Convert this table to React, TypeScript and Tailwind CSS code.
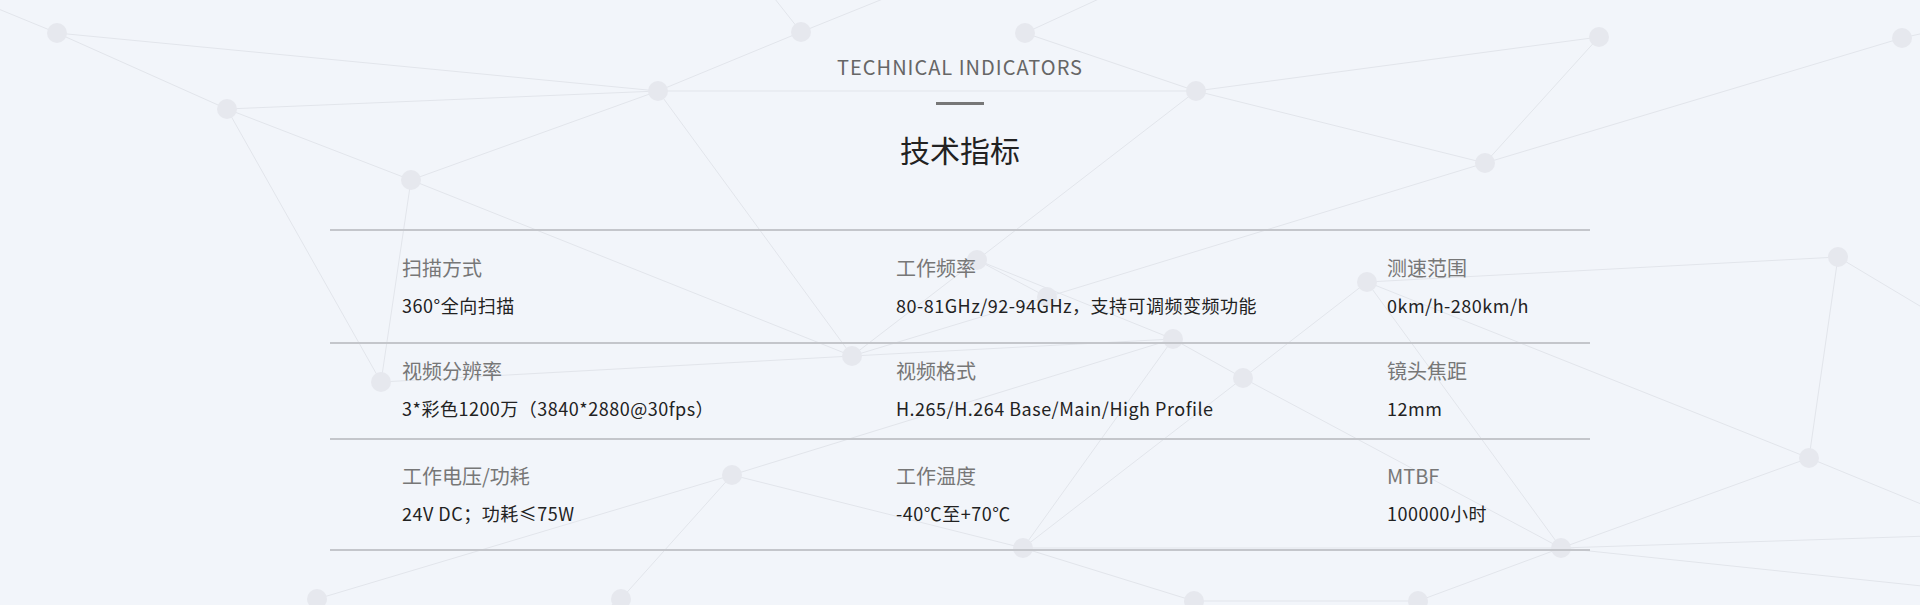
const nodes: Record<string, [number, number]> = {
  A: [57, 33],
  B: [227, 109],
  C: [411, 180],
  D: [658, 91],
  E: [801, 32],
  F: [1025, 33],
  G: [1196, 91],
  H: [1485, 163],
  I: [1599, 37],
  J: [1902, 38],
  K: [1838, 257],
  L: [1809, 458],
  M: [1561, 548],
  N: [1367, 282],
  O: [1243, 378],
  P: [1173, 339],
  Q: [977, 260],
  Z: [1047, 297],
  R: [852, 356],
  S: [381, 382],
  T: [732, 475],
  U: [1023, 548],
  V: [621, 599],
  W: [317, 599],
  X: [1194, 601],
  Y: [1418, 601],
};

// edges to other nodes, or to a point off the canvas
const edges: [string, string | [number, number]][] = [
  ['A', [-60, -15]],
  ['A', 'D'],
  ['A', 'B'],
  ['B', 'D'],
  ['B', 'C'],
  ['B', 'S'],
  ['C', 'D'],
  ['C', 'S'],
  ['C', 'R'],
  ['D', 'E'],
  ['D', 'R'],
  ['D', 'G'],
  ['E', [760, -20]],
  ['E', [930, -20]],
  ['F', 'G'],
  ['F', [1140, -20]],
  ['G', 'H'],
  ['G', 'I'],
  ['G', 'Q'],
  ['H', 'I'],
  ['H', 'J'],
  ['H', 'Z'],
  ['J', [1960, 25]],
  ['K', 'N'],
  ['K', 'L'],
  ['K', [1960, 330]],
  ['L', 'N'],
  ['L', 'M'],
  ['L', [1960, 520]],
  ['M', 'N'],
  ['M', 'O'],
  ['M', 'U'],
  ['M', [1960, 535]],
  ['M', [1960, 590]],
  ['M', 'Y'],
  ['N', 'O'],
  ['O', 'P'],
  ['O', 'U'],
  ['P', 'Q'],
  ['P', 'R'],
  ['P', 'T'],
  ['P', 'U'],
  ['Q', 'R'],
  ['Q', 'Z'],
  ['Z', 'R'],
  ['R', 'S'],
  ['T', 'W'],
  ['T', 'V'],
  ['T', 'U'],
  ['U', 'X'],
  ['V', [560, 640]],
  ['X', 'Y'],
];

const NetworkBackground = () => (
  <svg
    className="absolute inset-0 h-full w-full"
    viewBox="0 0 1920 605"
    preserveAspectRatio="none"
  >
    {edges.map(([a, b], idx) => {
      const [x1, y1] = nodes[a];
      const [x2, y2] = typeof b === 'string' ? nodes[b] : b;
      return (
        <line
          key={idx}
          x1={x1}
          y1={y1}
          x2={x2}
          y2={y2}
          stroke="#e2e5eb"
          strokeWidth={1}
        />
      );
    })}
    {Object.entries(nodes).map(([k, [cx, cy]]) => (
      <circle key={k} cx={cx} cy={cy} r={10} fill="#e6e8ee" />
    ))}
  </svg>
);

const rows = [
  {
    pad: 'pt-[23px] pb-[24px]',
    cells: [
      { label: '扫描方式', value: '360°全向扫描' },
      { label: '工作频率', value: '80-81GHz/92-94GHz，支持可调频变频功能' },
      { label: '测速范围', value: '0km/h-280km/h' },
    ],
  },
  {
    pad: 'pt-[13px] pb-[17px]',
    cells: [
      { label: '视频分辨率', value: '3*彩色1200万（3840*2880@30fps）' },
      { label: '视频格式', value: 'H.265/H.264 Base/Main/High Profile' },
      { label: '镜头焦距', value: '12mm' },
    ],
  },
  {
    pad: 'pt-[22px] pb-[23px]',
    cells: [
      { label: '工作电压/功耗', value: '24V DC；功耗≤75W' },
      { label: '工作温度', value: '-40℃至+70℃' },
      { label: 'MTBF', value: '100000小时' },
    ],
  },
];

export default function App() {
  return (
    <div className="relative h-[605px] w-full overflow-hidden bg-[#f2f5fa] font-['Noto_Sans_CJK_SC','Noto_Sans',sans-serif]">
      <NetworkBackground />

      <div className="relative flex flex-col items-center pt-[53px]">
        <p className="text-[20px] leading-[28px] tracking-[1px] text-[#666]">
          TECHNICAL INDICATORS
        </p>
        <div className="mt-[21px] h-[3px] w-[48px] bg-[#777]" />
        <h2 className="mt-[24px] text-[30px] leading-[40px] text-[#222]">
          技术指标
        </h2>

        {/* spec table */}
        <div className="mt-[60px] w-[1260px] border-t-2 border-[#c4c6cb]">
          {rows.map((row, idx) => (
            <div
              key={idx}
              className={`grid grid-cols-[494px_491px_1fr] border-b-2 border-[#c4c6cb] pl-[72px] ${row.pad}`}
            >
              {row.cells.map((cell, cIdx) => (
                <div key={cIdx}>
                  <p className="text-[20px] leading-[28px] text-[#777]">
                    {cell.label}
                  </p>
                  <p className="mt-[10px] text-[18px] leading-[26px] tracking-[0.5px] text-[#222]">
                    {cell.value}
                  </p>
                </div>
              ))}
            </div>
          ))}
        </div>
      </div>
    </div>
  );
}
